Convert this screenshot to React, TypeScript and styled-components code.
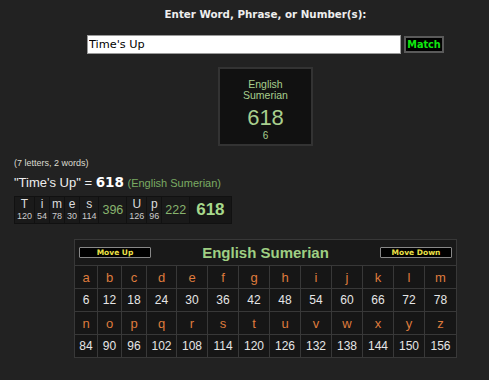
import React from "react";
import styled, { createGlobalStyle } from "styled-components";

const GlobalStyle = createGlobalStyle`
  html, body { margin: 0; padding: 0; background: #222; overflow: hidden; }
  body { font-family: "Liberation Sans", Arial, sans-serif; }
`;

const Page = styled.div`
  width: 489px;
  display: flex;
  flex-direction: column;
`;

const Centered = styled.div`
  margin-left: 42px;
  display: flex;
  flex-direction: column;
  align-items: center;
`;

const Title = styled.div`
  margin-top: 8px;
  text-align: center;
  font: bold 10.3px/12px "DejaVu Sans", sans-serif;
  color: #eee;
  white-space: nowrap;
`;

const FormRow = styled.div`
  margin-top: 15px;
  display: flex;
  justify-content: center;
  align-items: center;
  gap: 3px;
`;

const TextInput = styled.input`
  width: 314px;
  height: 19px;
  box-sizing: border-box;
  border: 1px solid #9a9a9a;
  padding: 0 1px;
  background: #fff;
  color: #000;
  font: 11.3px "DejaVu Sans", sans-serif;
  outline: none;
`;

const MatchButton = styled.button`
  width: 40px;
  height: 17px;
  box-sizing: border-box;
  padding: 0;
  background: #000;
  border: 2px solid #5a5a5a;
  color: #10e810;
  font: bold 9.7px/12px "DejaVu Sans", sans-serif;
`;

const ResultBox = styled.div`
  margin-top: 13px;
  width: 95px;
  height: 79px;
  box-sizing: border-box;
  border: 2px solid #333;
  background: #111;
  padding-top: 10px;
  display: flex;
  flex-direction: column;
  align-items: center;
  color: #a8cf8e;
  text-align: center;
`;

const BoxLabel = styled.div`
  font-size: 10.5px;
  line-height: 11px;
`;

const BoxValue = styled.div`
  margin-top: 5px;
  font-size: 22px;
  line-height: 24px;
`;

const BoxSub = styled.div`
  font-size: 10px;
  line-height: 11px;
`;

const LetterCount = styled.div`
  margin-top: 12px;
  padding-left: 14px;
  font-size: 9px;
  line-height: 11px;
  color: #dcdcd0;
`;

const Equation = styled.div`
  margin-top: 5px;
  padding-left: 14px;
  font-size: 13px;
  line-height: 16px;
  color: #eee;
  white-space: nowrap;
`;

const EqSum = styled.span`
  font: bold 13.5px "DejaVu Sans", sans-serif;
  color: #fff;
`;

const EqCipher = styled.span`
  font-size: 11px;
  color: #7aab62;
`;

const Breakdown = styled.div`
  align-self: flex-start;
  margin: 5px 0 0 14px;
  display: flex;
  gap: 1px;
  padding: 1px;
  background: #111;
`;

const LetterCell = styled.div`
  display: flex;
  flex-direction: column;
  align-items: center;
  padding: 1px 2px;
  background: #1a1a1a;
`;

const Letter = styled.div`
  font-size: 12px;
  line-height: 13px;
  color: #ddd;
`;

const LetterValue = styled.div`
  font-size: 9px;
  line-height: 11px;
  color: #ccc;
`;

const WordSum = styled.div`
  display: flex;
  align-items: center;
  padding: 0 3px;
  font-size: 12.5px;
  color: #88b36e;
  background: #1a1a1a;
`;

const Total = styled.div`
  display: flex;
  align-items: center;
  padding: 0 6px;
  font-weight: bold;
  font-size: 17px;
  color: #a6d88b;
  background: #161616;
`;

const Grid = styled.div`
  margin-top: 15px;
  display: grid;
  grid-template-columns: 22px 23px 24px 29px repeat(8, 30px) 31px;
  gap: 1px;
  padding: 1px;
  background: #383838;
`;

const Header = styled.div`
  grid-column: 1 / -1;
  height: 25px;
  display: flex;
  justify-content: space-between;
  align-items: center;
  padding: 0 4px;
  background: #191919;
`;

const HeaderTitle = styled.div`
  font-weight: bold;
  font-size: 15px;
  color: #9fcf83;
`;

const MoveButton = styled.button`
  width: 72px;
  height: 11px;
  box-sizing: border-box;
  padding: 0;
  background: #000;
  border: 1px solid #888;
  border-radius: 1px;
  color: #ece046;
  font: bold 7.5px/9px "DejaVu Sans", sans-serif;
`;

const Cell = styled.div<{ $letter?: boolean }>`
  height: 22px;
  display: flex;
  align-items: center;
  justify-content: center;
  background: #161616;
  font-size: ${(p) => (p.$letter ? "13px" : "12px")};
  color: ${(p) => (p.$letter ? "#df7b3d" : "#e6e6e6")};
`;

const word1 = [
  ["T", 120],
  ["i", 54],
  ["m", 78],
  ["e", 30],
  ["s", 114],
] as const;
const word2 = [
  ["U", 126],
  ["p", 96],
] as const;

const alphabet = "abcdefghijklmnopqrstuvwxyz".split("");

export default function App() {
  const rows = [alphabet.slice(0, 13), alphabet.slice(13)];
  return (
    <>
      <GlobalStyle />
      <Page>
        <Centered>
          <Title>Enter Word, Phrase, or Number(s):</Title>
          <FormRow>
            <TextInput value="Time's Up" readOnly />
            <MatchButton>Match</MatchButton>
          </FormRow>
          <ResultBox>
            <BoxLabel>
              English
              <br />
              Sumerian
            </BoxLabel>
            <BoxValue>618</BoxValue>
            <BoxSub>6</BoxSub>
          </ResultBox>
        </Centered>
        <LetterCount>(7 letters, 2 words)</LetterCount>
        <Equation>
          "Time's Up" = <EqSum>618</EqSum> <EqCipher>(English Sumerian)</EqCipher>
        </Equation>
        <Breakdown>
          {word1.map(([l, v], i) => (
            <LetterCell key={"a" + i}>
              <Letter>{l}</Letter>
              <LetterValue>{v}</LetterValue>
            </LetterCell>
          ))}
          <WordSum>396</WordSum>
          {word2.map(([l, v], i) => (
            <LetterCell key={"b" + i}>
              <Letter>{l}</Letter>
              <LetterValue>{v}</LetterValue>
            </LetterCell>
          ))}
          <WordSum>222</WordSum>
          <Total>618</Total>
        </Breakdown>
        <Centered>
          <Grid>
            <Header>
              <MoveButton>Move Up</MoveButton>
              <HeaderTitle>English Sumerian</HeaderTitle>
              <MoveButton>Move Down</MoveButton>
            </Header>
            {rows.map((row, r) => (
              <React.Fragment key={r}>
                {row.map((l) => (
                  <Cell $letter key={"l" + l}>
                    {l}
                  </Cell>
                ))}
                {row.map((l) => (
                  <Cell key={"n" + l}>{(l.charCodeAt(0) - 96) * 6}</Cell>
                ))}
              </React.Fragment>
            ))}
          </Grid>
        </Centered>
      </Page>
    </>
  );
}
